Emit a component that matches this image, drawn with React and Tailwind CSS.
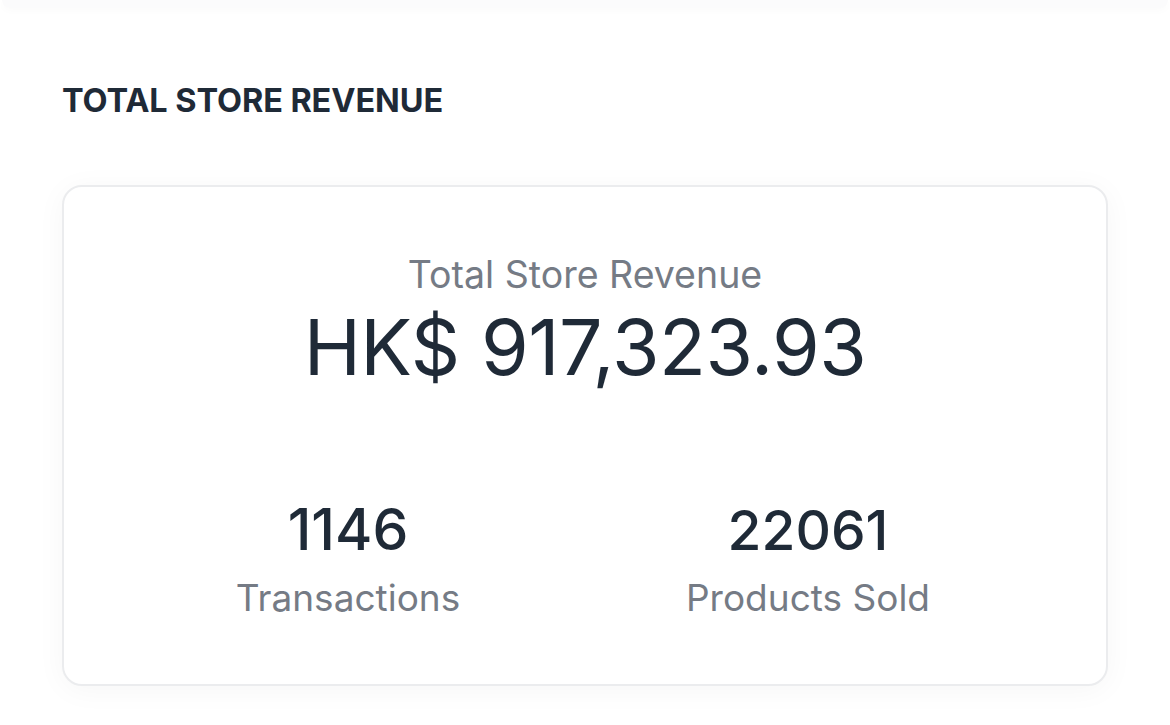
export default function App() {
  return (
    <div className="w-[1170px] h-[725px] bg-white overflow-hidden relative" style={{ fontFamily: "Inter, 'Noto Sans', sans-serif" }}>
      <div className="h-[8px] mx-[2px] rounded-b-[12px] bg-[#fbfbfc] shadow-[0_2px_8px_rgba(0,0,0,0.025)]" />
      <div className="px-[62px]">
        <h2 className="mt-[73px] text-[32.5px] leading-[40px] font-bold text-[#1f2a37] tracking-[-0.1px]">TOTAL STORE REVENUE</h2>
        <div className="mt-[64px] w-[1046px] h-[501px] rounded-[20px] border-2 border-[#ebecee] bg-white shadow-[0_4px_30px_rgba(0,0,0,0.04)] flex flex-col">
          <div className="flex flex-col items-center pt-[66px]">
            <div className="text-[37.5px] leading-[44px] text-[#757b85]">Total Store Revenue</div>
            <div className="mt-[5px] text-[77px] leading-[90px] text-[#1f2a37] tracking-[-0.5px]">HK$ 917,323.93</div>
          </div>
          <div className="grid grid-cols-2 pl-[54px] pr-[68px] mt-[106px]">
            <div className="flex flex-col items-center">
              <div className="text-[57px] leading-[64px] font-medium text-[#1f2a37]">1146</div>
              <div className="mt-[12px] text-[37px] leading-[48px] text-[#757b85]">Transactions</div>
            </div>
            <div className="flex flex-col items-center">
              <div className="text-[55px] leading-[64px] font-medium text-[#1f2a37]">22061</div>
              <div className="mt-[12px] text-[37px] leading-[48px] text-[#757b85]">Products Sold</div>
            </div>
          </div>
        </div>
      </div>
    </div>
  );
}
